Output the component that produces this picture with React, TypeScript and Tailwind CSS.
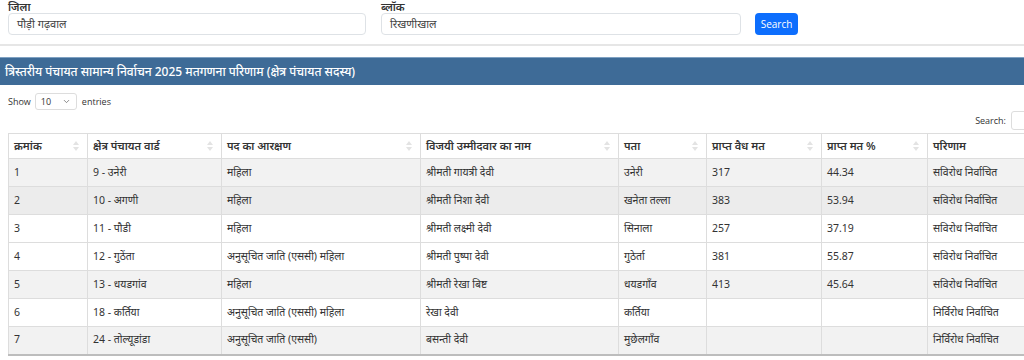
import { ChevronDown } from "lucide-react";

interface Row {
  sn: number;
  ward: string;
  reservation: string;
  winner: string;
  address: string;
  votes: string;
  percent: string;
  result: string;
}

const rows: Row[] = [
  { sn: 1, ward: "9 - उनेरी", reservation: "महिला", winner: "श्रीमती गायत्री देवी", address: "उनेरी", votes: "317", percent: "44.34", result: "सविरोध निर्वाचित" },
  { sn: 2, ward: "10 - अगणी", reservation: "महिला", winner: "श्रीमती निशा देवी", address: "खनेता तल्ला", votes: "383", percent: "53.94", result: "सविरोध निर्वाचित" },
  { sn: 3, ward: "11 - पौडी", reservation: "महिला", winner: "श्रीमती लक्ष्मी देवी", address: "सिनाला", votes: "257", percent: "37.19", result: "सविरोध निर्वाचित" },
  { sn: 4, ward: "12 - गुठेंता", reservation: "अनुसूचित जाति (एससी) महिला", winner: "श्रीमती पुष्पा देवी", address: "गुठेर्ता", votes: "381", percent: "55.87", result: "सविरोध निर्वाचित" },
  { sn: 5, ward: "13 - धयडगांव", reservation: "महिला", winner: "श्रीमती रेखा बिष्ट", address: "धयडगाँव", votes: "413", percent: "45.64", result: "सविरोध निर्वाचित" },
  { sn: 6, ward: "18 - कर्तिया", reservation: "अनुसूचित जाति (एससी) महिला", winner: "रेखा देवी", address: "कर्तिया", votes: "", percent: "", result: "निर्विरोध निर्वाचित" },
  { sn: 7, ward: "24 - तोल्यूडांडा", reservation: "अनुसूचित जाति (एससी)", winner: "बसन्ती देवी", address: "मुछेलगाँव", votes: "", percent: "", result: "निर्विरोध निर्वाचित" },
];

const columns = [
  { label: "क्रमांक", w: "w-[79px]" },
  { label: "क्षेत्र पंचायत वार्ड", w: "w-[134px]" },
  { label: "पद का आरक्षण", w: "w-[199px]" },
  { label: "विजयी उम्मीदवार का नाम", w: "w-[198px]" },
  { label: "पता", w: "w-[88px]" },
  { label: "प्राप्त वैध मत", w: "w-[115px]" },
  { label: "प्राप्त मत %", w: "w-[106px]" },
  { label: "परिणाम", w: "w-[170px]" },
];

const rowBg = ["bg-[#f2f2f2]", "bg-[#ececec]", "bg-white", "bg-white", "bg-[#f2f2f2]", "bg-white", "bg-[#f2f2f2]"];

const SortIcon = () => (
  <svg width="6" height="10" viewBox="0 0 6 10" className="shrink-0">
    <path d="M3 0 L6 4 L0 4 Z" fill="#e3e3e3" />
    <path d="M3 10 L6 6 L0 6 Z" fill="#e3e3e3" />
  </svg>
);

const App = () => {
  return (
    <div className="w-[1024px] h-[360px] overflow-hidden bg-white text-[#333] font-['Noto_Sans','Open_Sans',sans-serif]">
      {/* Filters */}
      <div className="flex items-end gap-[14px] px-2 pb-[9px]">
        <div className="w-[358px]">
          <div className="text-[11px] font-semibold leading-[13px]">जिला</div>
          <div className="h-[22px] border border-[#dee2e6] rounded-[4px] px-2 text-[11px] text-[#444] flex items-center">पौड़ी गढ़वाल</div>
        </div>
        <div className="w-[360px] ml-[1px]">
          <div className="text-[11px] font-semibold leading-[13px]">ब्लॉक</div>
          <div className="h-[22px] border border-[#dee2e6] rounded-[4px] px-2 text-[11px] text-[#444] flex items-center">रिखणीखाल</div>
        </div>
        <button className="h-[22px] w-[43px] rounded-[4px] bg-[#0d6efd] text-white text-[10px] font-['Open_Sans',sans-serif]">Search</button>
      </div>
      <div className="h-[2px] bg-[#e6e6e6]"></div>

      {/* Title bar */}
      <div className="mt-[11px] h-[28px] bg-[#3e6b97] border-t border-[#7fa1c2] flex items-center px-[5px]">
        <span className="text-white text-[12px] font-medium">त्रिस्तरीय पंचायत सामान्य निर्वाचन 2025 मतगणना परिणाम (क्षेत्र पंचायत सदस्य)</span>
      </div>

      {/* Show entries */}
      <div className="flex items-center gap-1 px-2 mt-[8px] text-[9px] text-[#333] font-['Open_Sans',sans-serif]">
        <span>Show</span>
        <div className="w-[42px] h-[17px] border border-[#ddd] rounded-[3px] flex items-center justify-between px-[5px]">
          <span>10</span>
          <ChevronDown className="w-[9px] h-[9px] text-[#666]" />
        </div>
        <span className="ml-[1px]">entries</span>
      </div>

      {/* Search */}
      <div className="flex items-center justify-end gap-[5px] mt-[1px] text-[9px] text-[#333] font-['Open_Sans',sans-serif] -mr-[40px]">
        <span>Search:</span>
        <div className="w-[53px] h-[19px] border border-[#ddd] rounded-[3px]"></div>
      </div>

      {/* Table */}
      <div className="ml-2 mt-[3px] w-[1090px]">
        <table className="border-collapse table-fixed text-[10.5px]">
          <thead>
            <tr className="h-[25px] text-[11px]">
              {columns.map((c) => (
                <th key={c.label} className={`${c.w} border border-[#ddd] text-left font-semibold px-[5px] bg-white`}>
                  <div className="flex items-center justify-between pr-[3px]">
                    <span>{c.label}</span>
                    <SortIcon />
                  </div>
                </th>
              ))}
            </tr>
          </thead>
          <tbody className="border-b-2 border-[#bdbdbd]">
            {rows.map((r, i) => (
              <tr key={r.sn} className={`h-[28px] ${rowBg[i]}`}>
                <td className="border border-[#ddd] px-[5px]">{r.sn}</td>
                <td className="border border-[#ddd] px-[5px]">{r.ward}</td>
                <td className="border border-[#ddd] px-[5px]">{r.reservation}</td>
                <td className="border border-[#ddd] px-[5px]">{r.winner}</td>
                <td className="border border-[#ddd] px-[5px]">{r.address}</td>
                <td className="border border-[#ddd] px-[5px]">{r.votes}</td>
                <td className="border border-[#ddd] px-[5px]">{r.percent}</td>
                <td className="border border-[#ddd] px-[5px]">{r.result}</td>
              </tr>
            ))}
          </tbody>
        </table>
      </div>
    </div>
  );
};

export default App;
